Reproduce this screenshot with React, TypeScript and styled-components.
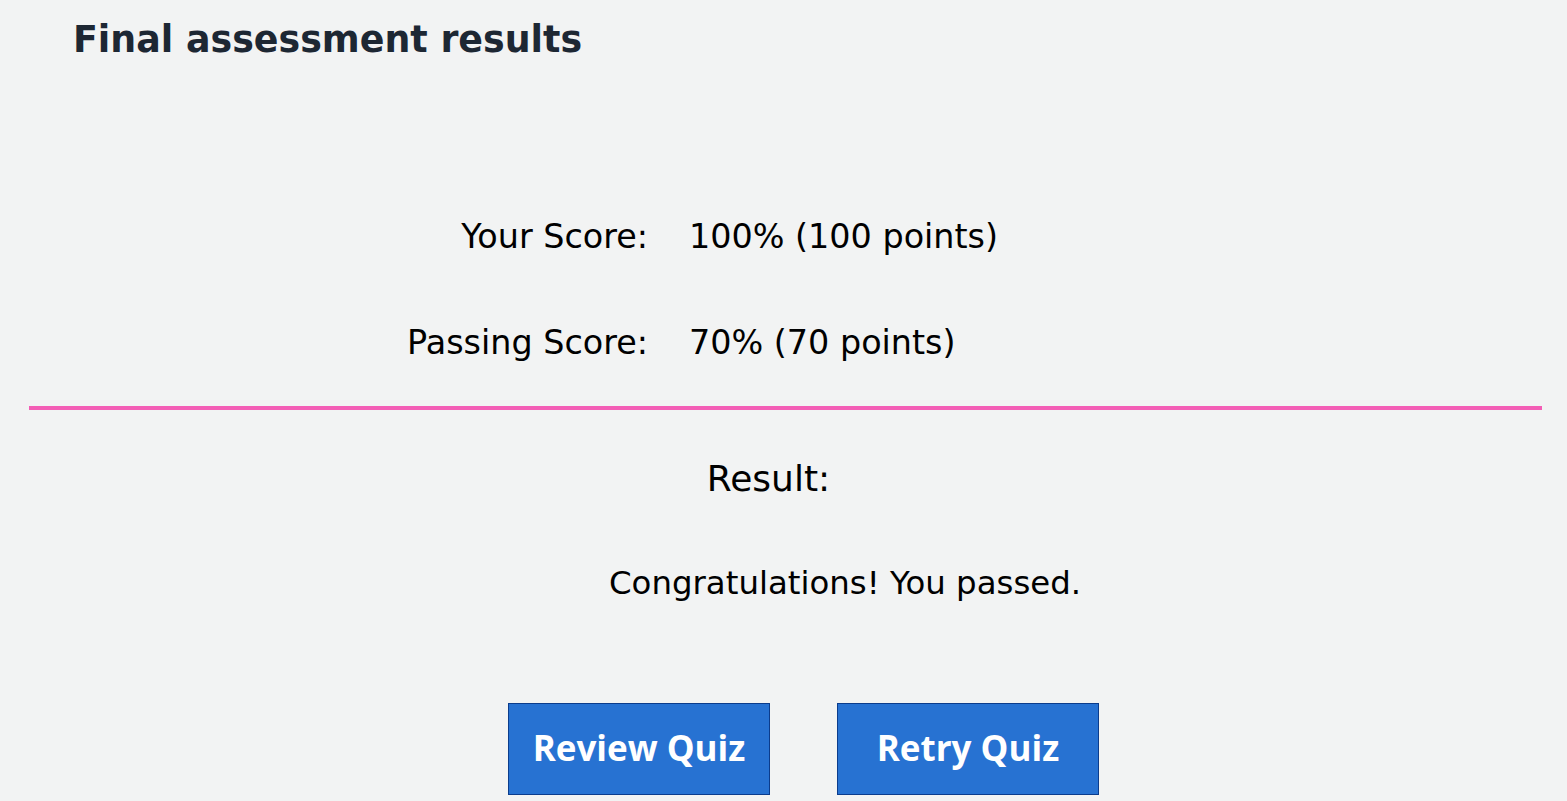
import React from "react";
import styled, { createGlobalStyle } from "styled-components";

const Global = createGlobalStyle`
  html, body { margin: 0; padding: 0; background: #f2f3f3; }
  body { font-family: "DejaVu Sans", "Open Sans", sans-serif; color: #000; }
`;

const Page = styled.div`
  width: 1567px;
  height: 801px;
  overflow: hidden;
  background: #f2f3f3;
`;

const Title = styled.h1`
  margin: 0;
  padding: 15px 0 0 73px;
  font-family: "DejaVu Sans", sans-serif;
  font-size: 36.4px;
  line-height: 50px;
  font-weight: 700;
  color: #1d2733;
`;

const Main = styled.div`
  margin: 0 25px 0 29px;
`;

const ScoreGrid = styled.div`
  display: grid;
  grid-template-columns: 619px auto;
  column-gap: 41px;
  row-gap: 62px;
  padding-top: 150px;
  font-size: 33.4px;
  line-height: 44px;
`;

const Label = styled.div`
  text-align: right;
`;

const Value = styled.div``;

const Divider = styled.div`
  margin-top: 41px;
  height: 4px;
  background: #f35db5;
`;

const ResultHeading = styled.div`
  margin-top: 47px;
  padding-right: 34px;
  text-align: center;
  font-size: 36px;
  line-height: 44px;
`;

const Message = styled.p`
  margin: 60px 0 0 580px;
  font-size: 32.4px;
  line-height: 44px;
`;

const Actions = styled.div`
  display: flex;
  gap: 67px;
  margin: 98px 0 0 479px;
`;

const Button = styled.button`
  width: 262px;
  height: 92px;
  background: #2772d2;
  border: 1px solid #0b3c8c;
  border-radius: 0;
  color: #fff;
  font-family: "Open Sans", "Noto Sans", sans-serif;
  font-weight: 700;
  font-size: 35px;
  padding: 0 0 3px;
`;

export default function App() {
  return (
    <Page>
      <Global />
      <Title>Final assessment results</Title>
      <Main>
        <ScoreGrid>
          <Label>Your Score:</Label>
          <Value>100% (100 points)</Value>
          <Label>Passing Score:</Label>
          <Value>70% (70 points)</Value>
        </ScoreGrid>
        <Divider />
        <ResultHeading>Result:</ResultHeading>
        <Message>Congratulations! You passed.</Message>
        <Actions>
          <Button>Review Quiz</Button>
          <Button>Retry Quiz</Button>
        </Actions>
      </Main>
    </Page>
  );
}
